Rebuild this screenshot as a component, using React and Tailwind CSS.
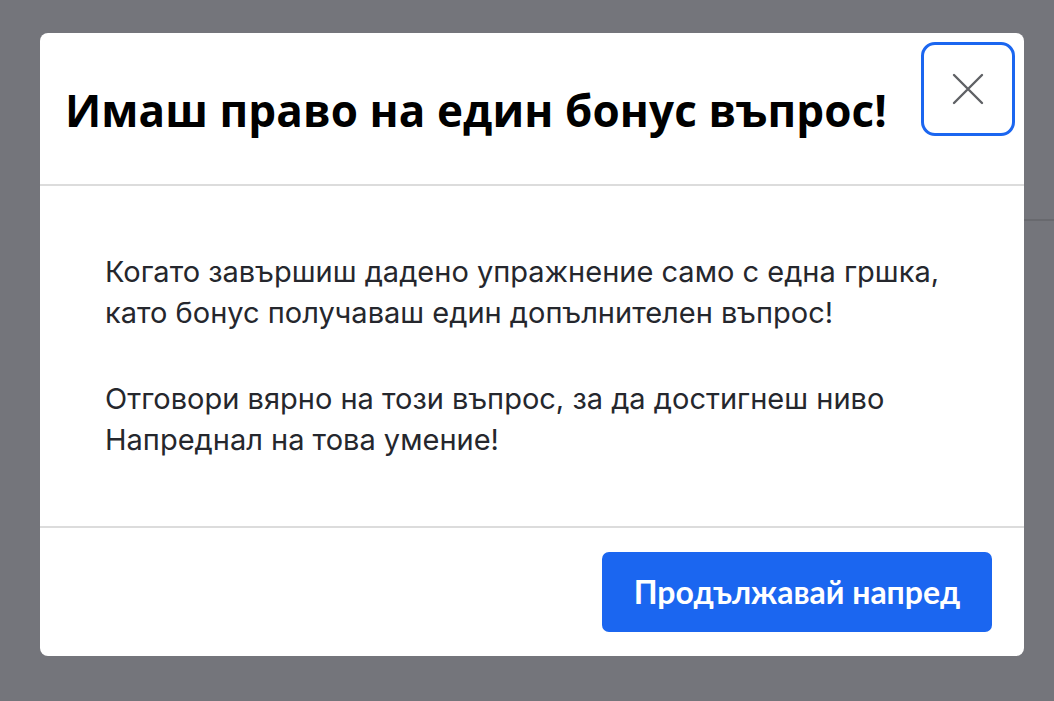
import React from "react";

export default function App() {
  return (
    <div className="relative h-[701px] w-full overflow-hidden bg-[#74757b]">
      <div className="absolute left-[1024px] right-0 top-[219px] h-[2px] bg-[#68696e]" />
      <div className="relative pl-[40px] pr-[30px] pt-[33px]">
        <div className="relative flex h-[623px] flex-col rounded-[8px] bg-white">
          <div className="flex h-[153px] shrink-0 items-center border-b-2 border-[#dcdcdc] pl-[25px]">
            <h1
              className="mt-[3px] text-[44px] font-bold leading-none tracking-[0.1px] text-black"
              style={{ fontFamily: '"Open Sans", "Noto Sans", sans-serif' }}
            >
              Имаш право на един бонус въпрос!
            </h1>
          </div>
          <button className="absolute right-[9px] top-[9px] flex h-[94px] w-[94px] items-center justify-center rounded-[14px] border-[3px] border-[#1b66f0] bg-white">
            <svg width="32" height="32" viewBox="0 0 32 32" fill="none">
              <path d="M2 2L30 30M30 2L2 30" stroke="#5f6165" strokeWidth="2.4" strokeLinecap="round" />
            </svg>
          </button>
          <div
            className="flex flex-1 flex-col justify-center gap-[45px] border-b-2 border-[#dcdcdc] px-[65px] pb-[2px] text-[29px] leading-[41px] text-[#25272d]"
            style={{ fontFamily: 'Inter, "Noto Sans", sans-serif' }}
          >
            <p>
              Когато завършиш дадено упражнение само с една гршка,
              <br />
              като бонус получаваш един допълнителен въпрос!
            </p>
            <p>
              Отговори вярно на този въпрос, за да достигнеш ниво
              <br />
              Напреднал на това умение!
            </p>
          </div>
          <div className="flex h-[128px] shrink-0 items-center justify-end pr-[32px]">
            <button
              className="flex h-[80px] w-[390px] items-center justify-center rounded-[7px] bg-[#1b66f0] text-[32px] font-bold text-white"
              style={{ fontFamily: 'Lato, "Noto Sans", sans-serif' }}
            >
              Продължавай напред
            </button>
          </div>
        </div>
      </div>
    </div>
  );
}
